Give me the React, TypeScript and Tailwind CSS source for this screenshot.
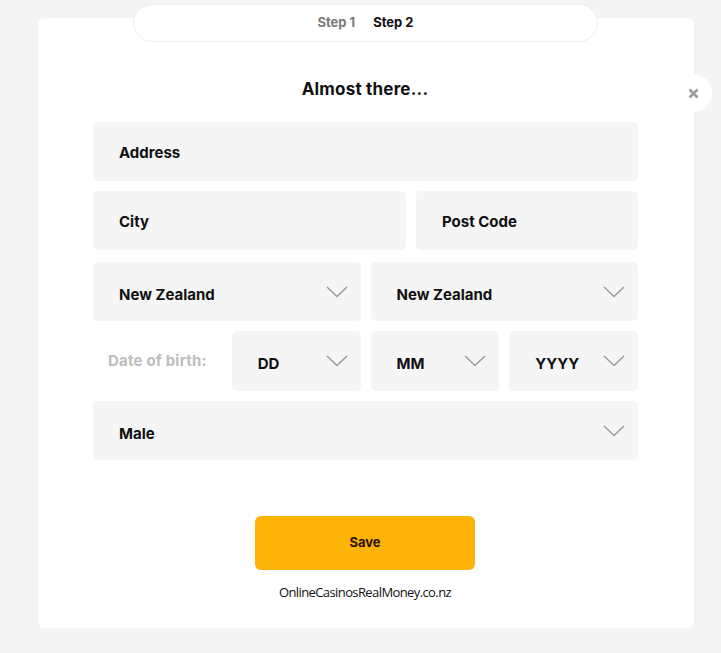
import { ReactNode } from 'react';

function Chevron() {
  return (
    <svg width="22" height="12" viewBox="0 0 22 12" fill="none" className="shrink-0">
      <path d="M1 1 L11 10.5 L21 1" stroke="#9a9a9a" strokeWidth="1.4" />
    </svg>
  );
}

function Field({ label, select = false, className = '' }: { label: string; select?: boolean; className?: string }) {
  return (
    <div className={`h-[59px] rounded-[5px] bg-[#f5f5f5] flex items-center justify-between pl-[26px] pr-[13px] ${className}`}>
      <span className={`${select ? 'pt-[7px]' : 'pt-[3px]'} text-[15px] font-bold text-[#111]`}>{label}</span>
      {select && <Chevron />}
    </div>
  );
}

function Row({ children, className = '' }: { children: ReactNode; className?: string }) {
  return <div className={`grid gap-[10px] ${className}`}>{children}</div>;
}

export default function App() {
  return (
    <div className="relative w-[721px] h-[653px] bg-[#f4f4f4] overflow-hidden" style={{ fontFamily: 'Inter, "Noto Sans", sans-serif' }}>
      {/* card */}
      <div className="ml-[38px] mt-[18px] w-[656px] h-[610px] bg-white rounded-[6px] flex flex-col items-center pt-[61px] pr-[2px]">
        <h1 className="text-[17px] leading-[21px] font-bold text-[#111] tracking-[0.2px]">Almost there...</h1>

        <div className="self-start ml-[55px] w-[545px] mt-[22px] flex flex-col">
          <Field label="Address" />
          <Row className="grid-cols-[313px_1fr] mt-[10px]">
            <Field label="City" />
            <Field label="Post Code" />
          </Row>
          <Row className="grid-cols-2 mt-[12px]">
            <Field label="New Zealand" select />
            <Field label="New Zealand" select />
          </Row>
          <Row className="grid-cols-4 mt-[10px]">
            <div className="h-[60px] flex items-center justify-center">
              <span className="text-[15px] font-bold text-[#bdbdbd] tracking-[0.2px]">Date of birth:</span>
            </div>
            <Field label="DD" select className="h-[60px]" />
            <Field label="MM" select className="h-[60px]" />
            <Field label="YYYY" select className="h-[60px]" />
          </Row>
          <Field label="Male" select className="mt-[10px]" />
        </div>

        <button className="mt-[56px] w-[220px] h-[54px] rounded-[6px] bg-[#fdb307] text-[13px] font-bold text-[#2a1606]">
          Save
        </button>
        <p className="mt-[13px] text-[13px] text-[#111] tracking-[-0.6px]" style={{ fontFamily: '"Open Sans", sans-serif' }}>
          OnlineCasinosRealMoney.co.nz
        </p>
      </div>

      {/* step pill */}
      <div className="absolute left-[133px] top-[4px] w-[465px] h-[38px] rounded-full bg-white border border-[#efefef] flex items-center justify-center gap-[18px]">
        <span className="text-[13px] font-bold text-[#7a7a7a]">Step 1</span>
        <span className="text-[13px] font-bold text-[#111]">Step 2</span>
      </div>

      {/* close */}
      <div className="absolute left-[674px] top-[74px] w-[38px] h-[38px] rounded-full bg-white flex items-center justify-center">
        <svg width="11" height="11" viewBox="0 0 11 11">
          <path d="M1.5 1.5 L9.5 9.5 M9.5 1.5 L1.5 9.5" stroke="#9c9c9c" strokeWidth="2.6" />
        </svg>
      </div>
    </div>
  );
}
